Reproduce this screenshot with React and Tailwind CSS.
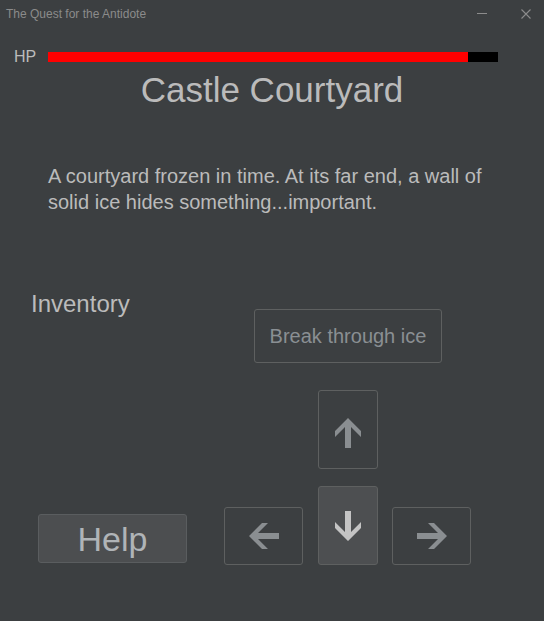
import React from 'react';

// arrow glyph drawn pointing up, rotated for other directions
const Arrow = ({ rotate = 0, color = '#8a8e91' }) => (
  <svg width="28" height="32" viewBox="0 0 28 32" style={{ transform: `rotate(${rotate}deg)` }}>
    <polygon
      points="14,1 27,14 27,20 17,10 17,31 11,31 11,10 1,20 1,14"
      fill={color}
    />
  </svg>
);

const App = () => {
  const hp = 420 / 450;

  return (
    <div className="w-[544px] h-[621px] bg-[#3c3f41] flex flex-col font-['Liberation_Sans',Arial,sans-serif] text-[#bbbbbb] overflow-hidden">
      {/* title bar */}
      <div className="h-[27px] flex items-center justify-between pl-[6px] pr-[13px]">
        <span className="text-[12px] text-[#8b8b8b]">The Quest for the Antidote</span>
        <div className="flex items-center gap-[34px]">
          <svg width="10" height="10" viewBox="0 0 10 10">
            <line x1="0" y1="4.5" x2="10" y2="4.5" stroke="#8c8c8c" strokeWidth="1" />
          </svg>
          <svg width="10" height="10" viewBox="0 0 10 10">
            <path d="M0.5 0.5 L9.5 9.5 M9.5 0.5 L0.5 9.5" stroke="#8c8c8c" strokeWidth="1.1" />
          </svg>
        </div>
      </div>

      {/* hp */}
      <div className="mt-[25px] h-[10px] flex items-center">
        <span className="w-[48px] pl-[14px] text-[16px] leading-none">HP</span>
        <div className="w-[450px] h-[10px] bg-black flex">
          <div className="h-full bg-[#ff0000]" style={{ width: `${hp * 100}%` }} />
        </div>
      </div>

      <h1 className="mt-[10px] h-[35px] text-[35px] leading-[35px] text-center">Castle Courtyard</h1>

      <p className="mt-[56px] ml-[48px] w-[448px] text-[20px] leading-[26px]">
        A courtyard frozen in time. At its far end, a wall of solid ice hides something...important.
      </p>

      {/* lower area */}
      <div className="mt-[77px] flex">
        <div className="w-[224px] flex flex-col justify-between pb-[2px]">
          <span className="pl-[31px] text-[24px] leading-none">Inventory</span>
          <button className="ml-[38px] w-[149px] h-[49px] rounded-[3px] border border-[#5a5d5f] bg-[#4c4e50] text-[34px] leading-none text-[#b0b4b7]">
            Help
          </button>
        </div>

        <div className="w-[248px] pt-[17px] flex flex-col items-center">
          <button className="w-[188px] h-[54px] rounded-[3px] border border-[#5e6060] text-[20px] text-[#8a8f93]">
            Break through ice
          </button>
          <button className="mt-[27px] w-[60px] h-[79px] rounded-[3px] border border-[#5e6060] flex items-center justify-center pt-[7px]">
            <Arrow />
          </button>
          <div className="mt-[17px] self-start flex items-end">
            <button className="w-[79px] h-[58px] rounded-[3px] border border-[#5e6060] flex items-center justify-center">
              <Arrow rotate={-90} />
            </button>
            <button className="ml-[15px] w-[60px] h-[79px] rounded-[3px] border border-[#5e6060] bg-[#4d4f51] flex items-center justify-center">
              <Arrow rotate={180} color="#c4c4c4" />
            </button>
            <button className="ml-[14px] w-[79px] h-[58px] rounded-[3px] border border-[#5e6060] flex items-center justify-center">
              <Arrow rotate={90} />
            </button>
          </div>
        </div>
      </div>
    </div>
  );
};

export default App;
